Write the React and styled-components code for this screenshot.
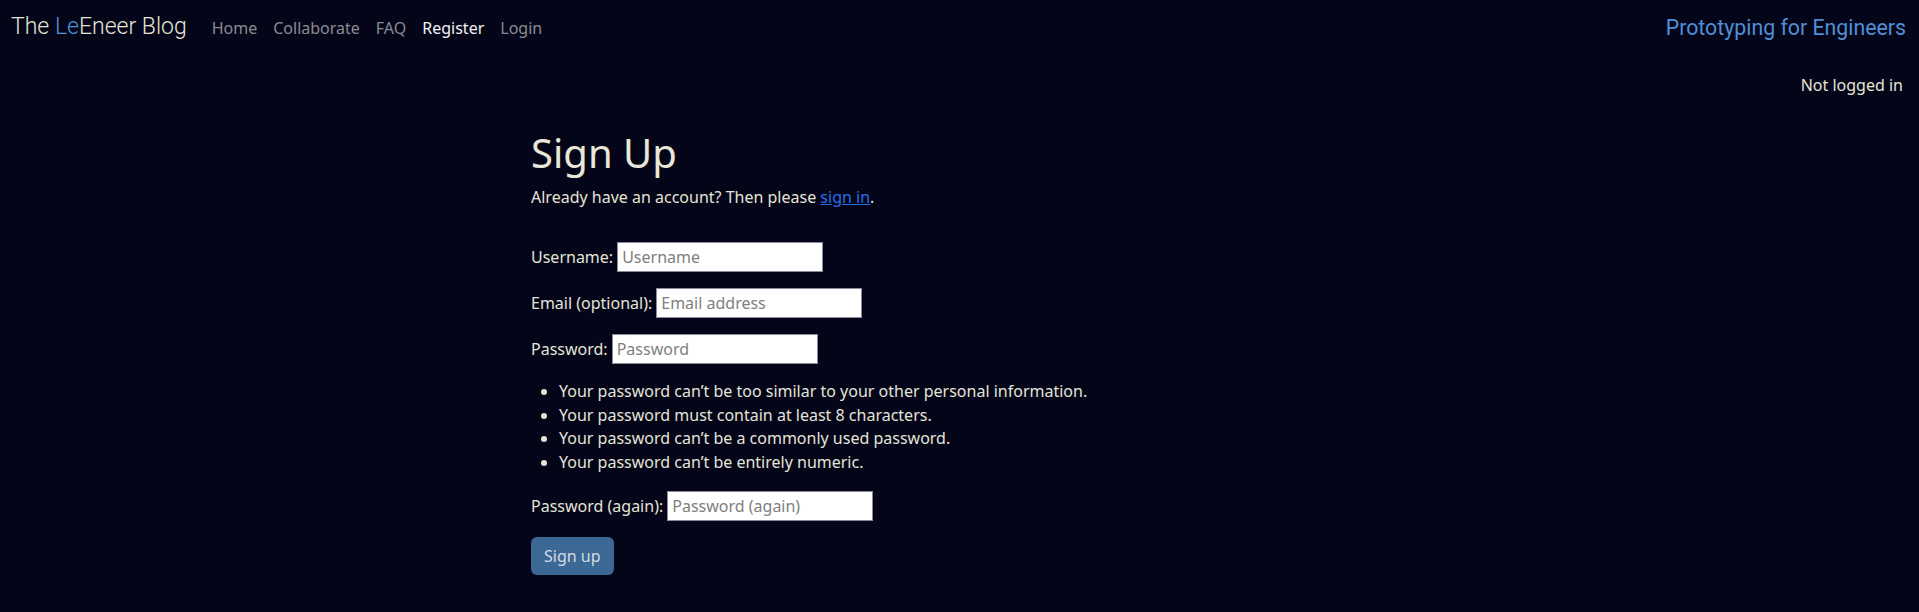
import React from "react";
import styled, { createGlobalStyle } from "styled-components";

const GlobalStyle = createGlobalStyle`
    body {
        margin: 0;
        background-color: #05051a;
        color: #e4e4d6;
        font-family: "Noto Sans", "DejaVu Sans", sans-serif;
        font-size: 16px;
        line-height: 1.5;
    }
`;

const Navbar = styled.nav`
    display: flex;
    align-items: center;
    justify-content: space-between;
    height: 54px;
    padding: 1px 13px 0 11px;
    box-sizing: border-box;
`;

const NavLeft = styled.div`
    display: flex;
    align-items: center;
`;

const Brand = styled.a`
    font-family: Roboto, "Liberation Sans", sans-serif;
    font-weight: 300;
    font-size: 23px;
    color: #e4e4d6;
    text-decoration: none;
    margin-right: 17px;
    span {
        color: #5193d8;
    }
`;

const NavList = styled.ul`
    display: flex;
    list-style: none;
    margin: 0;
    padding: 0;
`;

const NavLink = styled.a`
    display: block;
    padding: 0 8px;
    font-size: 16px;
    color: ${(props) => (props.$active ? "#f2f2f2" : "#8b8b90")};
    text-decoration: none;
`;

const Tagline = styled.a`
    font-family: Roboto, "Liberation Sans", sans-serif;
    font-size: 21.3px;
    color: #4f8fd6;
    text-decoration: none;
`;

const StatusBar = styled.div`
    display: flex;
    justify-content: flex-end;
    padding: 19px 16px 0 0;
`;

const Main = styled.main`
    max-width: 857px;
    margin: 0 auto;
`;

const Title = styled.h1`
    font-size: 40px;
    font-weight: 400;
    line-height: 1.2;
    margin: 32px 0 8px;
    color: #e8e8d8;
`;

const Intro = styled.p`
    margin: 0 0 33px;
    a {
        color: #2370e6;
    }
`;

const Row = styled.p`
    display: flex;
    align-items: center;
    gap: 4px;
    margin: 0 0 16px;
`;

const Input = styled.input`
    box-sizing: border-box;
    width: 206px;
    height: 30px;
    padding: 1px 4px;
    border: 1px solid #8a8a9c;
    border-radius: 0;
    background: #ffffff;
    color: #222;
    font-family: "Noto Sans", sans-serif;
    font-size: 16px;
    &::placeholder {
        color: #808080;
    }
`;

const Rules = styled.ul`
    margin: 0 0 16px;
    padding-left: 28px;
    line-height: 23.7px;
`;

const Button = styled.button`
    height: 38px;
    padding: 0 13px;
    border: none;
    border-radius: 6px;
    background: #3b6894;
    color: #d3dbe2;
    font-family: "Noto Sans", sans-serif;
    font-size: 16px;
`;

const navItems = [
    { label: "Home" },
    { label: "Collaborate" },
    { label: "FAQ" },
    { label: "Register", active: true },
    { label: "Login" },
];

const rules = [
    "Your password can’t be too similar to your other personal information.",
    "Your password must contain at least 8 characters.",
    "Your password can’t be a commonly used password.",
    "Your password can’t be entirely numeric.",
];

export default function App() {
    return (
        <>
            <GlobalStyle />
            <Navbar>
                <NavLeft>
                    <Brand href="#">The <span>Le</span>Eneer Blog</Brand>
                    <NavList>
                        {navItems.map((item) => (
                            <li key={item.label}>
                                <NavLink href="#" $active={item.active}>{item.label}</NavLink>
                            </li>
                        ))}
                    </NavList>
                </NavLeft>
                <Tagline href="#">Prototyping for Engineers</Tagline>
            </Navbar>
            <StatusBar>Not logged in</StatusBar>
            <Main>
                <Title>Sign Up</Title>
                <Intro>Already have an account? Then please <a href="#">sign in</a>.</Intro>
                <form>
                    <Row>Username: <Input placeholder="Username" /></Row>
                    <Row>Email (optional): <Input placeholder="Email address" /></Row>
                    <Row>Password: <Input type="password" placeholder="Password" /></Row>
                    <Rules>
                        {rules.map((r) => <li key={r}>{r}</li>)}
                    </Rules>
                    <Row>Password (again): <Input type="password" placeholder="Password (again)" /></Row>
                    <Button type="submit">Sign up</Button>
                </form>
            </Main>
        </>
    );
}
